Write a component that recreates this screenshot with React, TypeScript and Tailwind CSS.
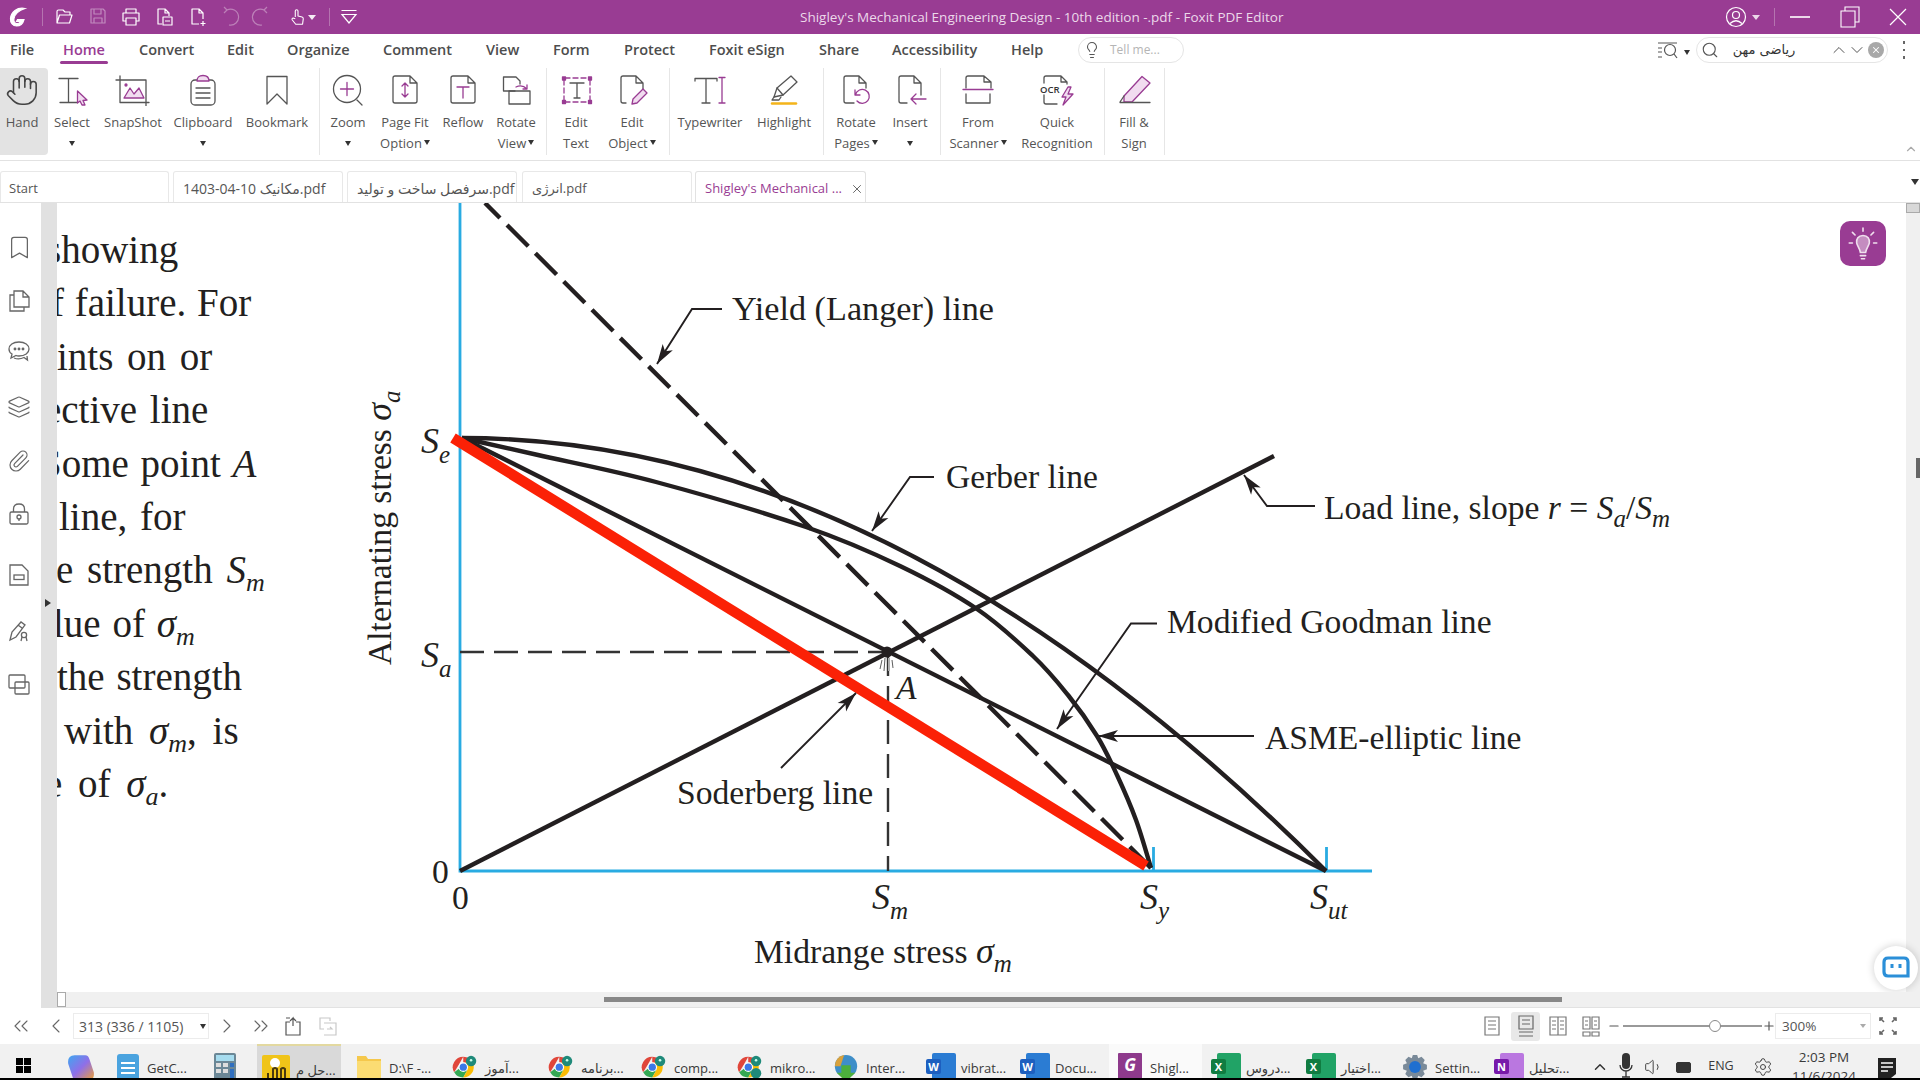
import React from "react";
import { Hand, ChevronsLeft, ChevronLeft, ChevronRight, ChevronsRight, ChevronUp, ChevronDown, X, Search, Lightbulb, Bookmark, Layers, Paperclip, Settings, Minus, Plus, Volume1 } from "lucide-react";

const G = "#555";
const P = "#993c93";
const SANS = "font-['Open_Sans','Noto_Sans','DejaVu_Sans',sans-serif]";

const Ico = ({ children, w = 40, h = 32, vb }: { children: React.ReactNode; w?: number; h?: number; vb?: string }) => (
  <svg width={w} height={h} viewBox={vb ?? `0 0 ${w} ${h}`} fill="none" stroke={G} strokeWidth={1.3} strokeLinejoin="round" strokeLinecap="round">
    {children}
  </svg>
);
const Doc = ({ x = 9, y = 2, w = 23, h = 27 }: { x?: number; y?: number; w?: number; h?: number }) => (
  <path d={`M${x + 2} ${y}H${x + w - 7}L${x + w} ${y + 7}V${y + h - 2}Q${x + w} ${y + h} ${x + w - 2} ${y + h}H${x + 2}Q${x} ${y + h} ${x} ${y + h - 2}V${y + 2}Q${x} ${y} ${x + 2} ${y}ZM${x + w - 7} ${y}V${y + 7}H${x + w}`} />
);

const icons: Record<string, React.ReactNode> = {
  hand: <Hand size={34} strokeWidth={1.1} color="#444" />,
  select: (
    <Ico>
      <path d="M7 4.5H26M16.5 4.5V28.5M8 28.5H25" />
      <path d="M25.5 17L35 26L31 26.5L33 31L30 31L28 27L25.5 29Z" stroke={P} fill="#f1dcf0" />
    </Ico>
  ),
  snap: (
    <Ico>
      <path d="M7 2V28.5H36M3 6H33V32" />
      <path d="M11 24L17 14L21 20L26 14L31 24Z" stroke={P} fill="#f1dcf0" />
      <circle cx="13" cy="11" r="1" fill={P} stroke={P} />
    </Ico>
  ),
  clip: (
    <Ico>
      <rect x="8" y="6" width="24" height="25" rx="4" />
      <path d="M14 7Q14 1.5 20 1.5Q26 1.5 26 7Z" stroke={P} fill="#f1dcf0" />
      <path d="M13 14H27M13 19H27M13 24H27" />
    </Ico>
  ),
  bookmark: (
    <Ico>
      <path d="M10 2.5H30V30L20 20L10 30Z" />
    </Ico>
  ),
  zoom: (
    <Ico>
      <circle cx="19" cy="15" r="13.5" />
      <path d="M29 26L34 31" />
      <path d="M19 8.5V21.5M12.5 15H25.5" stroke={P} />
    </Ico>
  ),
  pagefit: (
    <Ico>
      <Doc x={8} y={2} w={24} h={27} />
      <path d="M20 9V23M17 12L20 9L23 12M17 20L20 23L23 20" stroke={P} />
    </Ico>
  ),
  reflow: (
    <Ico>
      <Doc x={8} y={2} w={24} h={27} />
      <path d="M14 13H26M20 13V24" stroke={P} />
    </Ico>
  ),
  rotateview: (
    <Ico>
      <path d="M19 17H7.5V3H20L24 7V10" />
      <path d="M13 30V17H34V30Z" />
      <path d="M20 13Q26 10 31 15M31 15L31 11M31 15L27 15" stroke={P} />
    </Ico>
  ),
  edittext: (
    <Ico>
      <path d="M9 4H33M9 28H33M8 6V26M34 6V26" strokeDasharray="5 3" stroke={P} />
      <rect x="6.5" y="3" width="3" height="3" fill={P} stroke={P} />
      <rect x="32.5" y="3" width="3" height="3" fill={P} stroke={P} />
      <rect x="6.5" y="26.5" width="3" height="3" fill={P} stroke={P} />
      <rect x="32.5" y="26.5" width="3" height="3" fill={P} stroke={P} />
      <path d="M14 9H28M21 9V24M18 24H24" />
    </Ico>
  ),
  editobj: (
    <Ico>
      <path d="M14 29H11Q9 29 9 27V4Q9 2 11 2H24L31 9V15M24 2V9H31" />
      <path d="M20 30L21 25L31 15L35 19L25 29Z" stroke={P} fill="#f1dcf0" />
    </Ico>
  ),
  typewriter: (
    <Ico>
      <path d="M5 7V4.5H27V7M16 4.5V29M12 29H20" />
      <path d="M29 3.5H35M32 3.5V29M29 29H35" stroke={P} />
    </Ico>
  ),
  highlight: (
    <Ico>
      <path d="M10 23L13 14L27 2L33 8L19 21Z" fill="#fff" />
      <path d="M13 14L19 21M10 23L8 26H15L17 23" />
      <path d="M8 29.5H32" stroke="#f4b41a" strokeWidth="2.5" />
    </Ico>
  ),
  rotatepages: (
    <Ico>
      <path d="M18 29H10Q8 29 8 27V4Q8 2 10 2H23L30 9V14M23 2V9H30" />
      <path d="M19 16L19 21L24 21M19.5 20.5A7 7 0 1 1 21 27" stroke={P} />
    </Ico>
  ),
  insert: (
    <Ico>
      <path d="M17 29H11Q9 29 9 27V4Q9 2 11 2H24L31 9V21M24 2V9H31" />
      <path d="M36 25H21M26 20L21 25L26 30" stroke={P} />
    </Ico>
  ),
  scanner: (
    <Ico>
      <path d="M8 14V4Q8 2 10 2H26L33 8V14M26 2V8H33" />
      <path d="M5 15.5H35" stroke={P} />
      <path d="M8 20V29H32V20" />
    </Ico>
  ),
  ocr: (
    <Ico>
      <path d="M7 9V4Q7 2 9 2H24L30 8V10M24 2V8H30M7 21V28Q7 30 9 30H20" />
      <text x="3" y="19" fontSize="9.5" fontFamily="Open Sans" fill="#333" stroke="none" fontWeight="600">OCR</text>
      <path d="M31 13L25 23H29L26 31L36 20H31L34 13Z" stroke={P} fill="#f1dcf0" />
    </Ico>
  ),
  fill: (
    <Ico>
      <path d="M10 22L28 2.5L36 9L18 28H10Z" stroke={P} fill="#f1dcf0" />
      <path d="M6 28.5H36M10 22L6 28" />
    </Ico>
  ),
};

const Caret = () => <span className="inline-block w-0 h-0 border-l-[3.5px] border-r-[3.5px] border-t-[5px] border-l-transparent border-r-transparent border-t-[#333]" />;

type RItem = { w: string; icon: string; l1: string; l2?: string; caret?: "below" | "inline"; active?: boolean };
const ribbon: (RItem | { sep: string })[] = [
  { w: "w-[48px]", icon: "hand", l1: "Hand", active: true },
  { w: "w-[48px]", icon: "select", l1: "Select", caret: "below" },
  { w: "w-[74px]", icon: "snap", l1: "SnapShot" },
  { w: "w-[66px]", icon: "clip", l1: "Clipboard", caret: "below" },
  { w: "w-[82px]", icon: "bookmark", l1: "Bookmark" },
  { sep: "w-[2px]" },
  { w: "w-[56px]", icon: "zoom", l1: "Zoom", caret: "below" },
  { w: "w-[58px]", icon: "pagefit", l1: "Page Fit", l2: "Option", caret: "inline" },
  { w: "w-[58px]", icon: "reflow", l1: "Reflow" },
  { w: "w-[48px]", icon: "rotateview", l1: "Rotate", l2: "View", caret: "inline" },
  { sep: "w-[7px]" },
  { w: "w-[58px]", icon: "edittext", l1: "Edit", l2: "Text" },
  { w: "w-[54px]", icon: "editobj", l1: "Edit", l2: "Object", caret: "inline" },
  { sep: "w-[11px]" },
  { w: "w-[80px]", icon: "typewriter", l1: "Typewriter" },
  { w: "w-[68px]", icon: "highlight", l1: "Highlight" },
  { sep: "w-[6px]" },
  { w: "w-[64px]", icon: "rotatepages", l1: "Rotate", l2: "Pages", caret: "inline" },
  { w: "w-[44px]", icon: "insert", l1: "Insert", caret: "below" },
  { sep: "w-[9px]" },
  { w: "w-[74px]", icon: "scanner", l1: "From", l2: "Scanner", caret: "inline" },
  { w: "w-[84px]", icon: "ocr", l1: "Quick", l2: "Recognition" },
  { sep: "w-[6px]" },
  { w: "w-[58px]", icon: "fill", l1: "Fill &", l2: "Sign" },
  { sep: "w-[2px]" },
];

const menu = [
  ["File", "w-[63px]", "pl-[10px]"],
  ["Home", "w-[76px]", ""],
  ["Convert", "w-[88px]", ""],
  ["Edit", "w-[60px]", ""],
  ["Organize", "w-[96px]", ""],
  ["Comment", "w-[103px]", ""],
  ["View", "w-[67px]", ""],
  ["Form", "w-[71px]", ""],
  ["Protect", "w-[85px]", ""],
  ["Foxit eSign", "w-[110px]", ""],
  ["Share", "w-[73px]", ""],
  ["Accessibility", "w-[119px]", ""],
  ["Help", "w-[67px]", ""],
];

const Qa = ({ className, children }: { className: string; children: React.ReactNode }) => (
  <div className={`flex justify-center ${className}`}>
    <svg width="22" height="22" viewBox="0 0 22 22" fill="none" stroke="#fff" strokeWidth="1.2" strokeLinejoin="round">{children}</svg>
  </div>
);

const TitleBar = () => (
  <div className="h-[34px] bg-[#993c93] flex items-center shrink-0 text-white relative">
    <div className="w-[36px] flex justify-center items-center">
      <svg width="20" height="22" viewBox="0 0 20 22" fill="none">
        <path d="M17 2.5C9 1 3 6 2.5 12.5C2.2 17 5 20 8.5 20C12 20 15 17.5 16 13.5L9.5 13.5L8.5 15.5L12.5 15.5C11.5 17 10 17.8 8.5 17.6C6.5 17.2 5.5 15 6 12.5C6.8 8 11 4.5 17 2.5Z" fill="#fff" stroke="#fff" strokeWidth="1.2" />
      </svg>
    </div>
    <div className="w-[6px]" />
    <div className="w-px h-[18px] bg-[#b574b0]" />
    <div className="w-[6px]" />
    <div className="flex items-center w-[239px]">
      <Qa className="w-[31px]"><path d="M3 17V5.5Q3 4 4.5 4H9L11 6H16V9M3 17H15.5L18 9H5.5L3 17Z" /></Qa>
      <Qa className="w-[36px] opacity-40"><path d="M4 3H16L18 5V17H4ZM7 3V8H14V3M7 17V12H15V17" /></Qa>
      <Qa className="w-[30px]"><path d="M6 7V3H16V7M6 15H3V7H19V15H16M6 12H16V19H6Z" /></Qa>
      <Qa className="w-[35px]"><path d="M9 18H5V3H12L16 7V10M12 3V7H16M10 11H19V19H10ZM12 15H17" /></Qa>
      <Qa className="w-[33px]"><path d="M12 18H5V3H12L16 7V13M12 3V7H16M16 15V20M13.5 17.5H18.5" /></Qa>
      <Qa className="w-[32px] opacity-35"><path d="M8 4A8 8 0 1 1 10 19M8 4L5 7M8 4L5 1" /></Qa>
      <Qa className="w-[30px] opacity-35"><path d="M14 4A8 8 0 1 0 12 19M14 4L17 7M14 4L17 1" /></Qa>
    </div>
    <div className="flex items-center w-[30px]">
      <Qa className="w-[20px]"><path d="M8 11V4.5Q8 3 9.5 3Q11 3 11 4.5V10L15.5 11Q17 11.5 16.8 13L16 19H8.5L4.5 14Q4 12.5 5.5 12L8 13" /></Qa>
      <span className="w-0 h-0 border-l-[4px] border-r-[4px] border-t-[5px] border-l-transparent border-r-transparent border-t-white/90" />
    </div>
    <div className="w-[11px]" />
    <div className="w-px h-[18px] bg-[#b574b0]" />
    <div className="w-[20px] flex justify-center ml-[9px]">
      <svg width="18" height="18" viewBox="0 0 18 18" fill="none" stroke="#fff" strokeWidth="1.2"><path d="M1.5 2.5H16.5M2 6.5L9 15L16 6.5Z" /></svg>
    </div>
    <div className="flex-1 pl-[441px] text-[13.5px] text-[#ecd9ea] whitespace-nowrap">Shigley's Mechanical Engineering Design - 10th edition -.pdf - Foxit PDF Editor</div>
    <div className="flex items-center shrink-0">
      <svg width="22" height="22" viewBox="0 0 22 22" fill="none" stroke="#fff" strokeWidth="1.2"><circle cx="11" cy="11" r="9.5" /><circle cx="11" cy="9" r="3.5" /><path d="M5 17.5Q11 12 17 17.5" /></svg>
      <span className="ml-[5px] mr-[14px] w-0 h-0 border-l-[4px] border-r-[4px] border-t-[5px] border-l-transparent border-r-transparent border-t-white/80" />
      <div className="w-px h-[18px] bg-[#b574b0]" />
      <div className="w-[49px] flex justify-center"><div className="w-[20px] h-[1.5px] bg-white/80" /></div>
      <div className="w-[51px] flex justify-center">
        <svg width="20" height="22" viewBox="0 0 20 22" fill="none" stroke="#fff" strokeWidth="1.1"><path d="M5 5V1H19V16H15M1 5H15V21H1Z" /></svg>
      </div>
      <div className="w-[45px] flex justify-center">
        <svg width="20" height="20" viewBox="0 0 20 20" fill="none" stroke="#fff" strokeWidth="1.2"><path d="M2 2L18 18M18 2L2 18" /></svg>
      </div>
    </div>
  </div>
);

const MenuRow = () => (
  <div className="h-[32px] flex items-center shrink-0 text-[14.5px] font-semibold text-[#4d4d4d] bg-white">
    <div className="flex items-center h-full">
      {menu.map(([t, w, p]) => (
        <div key={t} className={`${w} ${p} h-full flex items-center whitespace-nowrap`}>
          {t === "Home" ? (
            <div className="relative text-[#993c93] h-full flex items-center">
              {t}
              <div className="absolute left-[-3px] right-[-3px] top-[27px] h-[3px] rounded bg-[#993c93]" />
            </div>
          ) : (
            t
          )}
        </div>
      ))}
    </div>
    <div className="w-[106px] h-[26px] rounded-full border border-[#e5e5e5] flex items-center pl-[4px] gap-[9px] font-normal text-[12px] text-[#b5b5b5]">
      <Lightbulb size={18} strokeWidth={1.4} color="#555" />
      Tell me...
    </div>
    <div className="flex-1" />
    <svg width="22" height="20" viewBox="0 0 22 20" fill="none" stroke="#555" strokeWidth="1.2"><path d="M1 3H20M1 8H5M1 12H5M1 17H5" /><circle cx="13" cy="10" r="5.5" /><path d="M17 14L20 18" /></svg>
    <span className="ml-[5px] mr-[6px]"><Caret /></span>
    <div className="w-[192px] h-[26px] rounded-full border border-[#e5e5e5] flex items-center pl-[4px] font-normal">
      <Search size={18} strokeWidth={1.5} color="#555" />
      <span className="ml-[12px] text-[13px] text-[#333] font-['DejaVu_Sans',sans-serif] w-[66px] text-center" dir="rtl">ریاضی مهن</span>
      <div className="flex-1" />
      <ChevronUp size={20} strokeWidth={1.2} color="#555" />
      <ChevronDown size={20} strokeWidth={1.2} color="#555" className="ml-[-2px]" />
      <span className="ml-[1px] mr-[3px] w-[16px] h-[16px] rounded-full bg-[#a8a8a8] flex items-center justify-center"><X size={10} color="#fff" strokeWidth={2.5} /></span>
    </div>
    <div className="w-[32px] flex flex-col items-center gap-[5px]">
      <span className="w-[2.5px] h-[2.5px] bg-[#666]" />
      <span className="w-[2.5px] h-[2.5px] bg-[#666]" />
      <span className="w-[2.5px] h-[2.5px] bg-[#666]" />
    </div>
  </div>
);

const Ribbon = () => (
  <div className="h-[95px] shrink-0 border-b border-[#e2e2e2] flex items-start relative bg-white">
    {ribbon.map((it, i) =>
      "sep" in it ? (
        <div key={i} className={`${it.sep} h-[87px] mt-[2px] border-r border-[#e6e6e6]`} />
      ) : (
        <div key={i} className={`${it.w} h-[87px] mt-[2px] flex flex-col items-center pt-[6px] text-[13px] leading-[21px] text-[#555] whitespace-nowrap ${it.active ? "bg-[#e3e3e3] rounded-r-[4px] pr-[4px]" : ""}`}>
          <div className="h-[32px] flex items-center justify-center">{icons[it.icon]}</div>
          <div className="mt-[6px]">{it.l1}</div>
          {it.l2 && (
            <div className="flex items-center gap-[2px]">
              {it.l2}
              {it.caret === "inline" && <span className="mt-[-7px]"><Caret /></span>}
            </div>
          )}
          {it.caret === "below" && <div className="h-[21px] flex items-center"><Caret /></div>}
        </div>
      )
    )}
    <ChevronUp size={14} color="#aaa" className="absolute right-[2px] top-[76px]" />
  </div>
);

const tabs = [
  ["Start", "w-[169px] text-[13px]", "pl-[8px]"],
  ["1403-04-10 مکانیک.pdf", "w-[170px] ml-[4px] text-[14px]", "pl-[9px]"],
  ["سرفصل ساخت و تولید.pdf", "w-[170px] ml-[4px] text-[14px]", "pl-[9px]"],
  ["انرژی.pdf", "w-[170px] ml-[5px] text-[13px]", "pl-[9px]"],
];

const TabRow = () => (
  <div className="h-[42px] shrink-0 border-b border-[#e2e2e2] flex items-end text-[#555] bg-white relative">
    {tabs.map(([t, w, p]) => (
      <div key={t} className={`${w} ${p} h-[31px] pt-[3px] border border-b-0 border-[#e8e8e8] rounded-t-[3px] flex items-center whitespace-nowrap`}>{t}</div>
    ))}
    <div className="w-[171px] ml-[3px] h-[31px] pt-[3px] border border-b-0 border-[#e2e2e2] rounded-t-[3px] flex items-center pl-[9px] text-[13px] text-[#993c93] whitespace-nowrap">
      <span className="w-[145px]">Shigley's Mechanical ...</span>
      <X size={14} color="#555" strokeWidth={1.5} />
    </div>
    <span className="absolute right-[1px] top-[18px] w-0 h-0 border-l-[4.5px] border-r-[4.5px] border-t-[6px] border-l-transparent border-r-transparent border-t-[#333]" />
  </div>
);

const sideIcons: [string, React.ReactNode][] = [
  ["mt-[32px]", <Bookmark size={27} strokeWidth={1.1} color="#666" />],
  ["mt-[30px]", <svg width="24" height="24" viewBox="0 0 24 24" fill="none" stroke="#666" strokeWidth="1.3"><path d="M7 18V2H16L22 8V18ZM16 2V8H22M7 6H3V22H17V18" /></svg>],
  ["mt-[27px]", <svg width="24" height="24" viewBox="0 0 24 24" fill="none" stroke="#666" strokeWidth="1.3"><path d="M12 2C6 2 2 5 2 9C2 11 3 13 5 14L4 18L9 15.5C10 16 11 16 12 16C18 16 22 13 22 9C22 5 18 2 12 2Z" /><path d="M7 18Q12 20 17 17.5L20.5 20L20 16" /><circle cx="8" cy="9" r=".8" fill="#666" /><circle cx="12" cy="9" r=".8" fill="#666" /><circle cx="16" cy="9" r=".8" fill="#666" /></svg>],
  ["mt-[31px]", <Layers size={24} strokeWidth={1.2} color="#666" />],
  ["mt-[30px]", <Paperclip size={24} strokeWidth={1.2} color="#666" />],
  ["mt-[29px]", <svg width="24" height="24" viewBox="0 0 24 24" fill="none" stroke="#666" strokeWidth="1.3"><rect x="3" y="10" width="18" height="12" rx="1.5" /><path d="M6.5 10V7Q6.5 2 12 2Q17.5 2 17.5 7V10" /><circle cx="12" cy="15" r="2" /><path d="M12 17V19" /></svg>],
  ["mt-[37px]", <svg width="24" height="24" viewBox="0 0 24 24" fill="none" stroke="#666" strokeWidth="1.3"><path d="M3 2H15L21 8V22H3Z" /><rect x="7" y="12" width="10" height="4.5" /></svg>],
  ["mt-[32px]", <svg width="24" height="24" viewBox="0 0 24 24" fill="none" stroke="#666" strokeWidth="1.3"><path d="M3 21L5 13L14 3L18 6L9 18L3 21ZM11 6L15 9" /><circle cx="17" cy="16" r="2.6" /><path d="M15 18L14 22M19 18L20 22" /></svg>],
  ["mt-[29px]", <svg width="24" height="24" viewBox="0 0 24 24" fill="none" stroke="#666" strokeWidth="1.3"><rect x="2" y="3" width="16" height="13" rx="1" /><rect x="8" y="10" width="14" height="12" rx="1" /></svg>],
];

const Sub = ({ children }: { children: React.ReactNode }) => <i className="text-[26px] leading-none align-[-8px]">{children}</i>;

const lines: [string, React.ReactNode][] = [
  ["ml-[-11px]", "showing"],
  ["ml-[-6px] [word-spacing:1px]", "f failure. For"],
  ["ml-[0px] [word-spacing:4px]", "ints on or"],
  ["ml-[-13px] [word-spacing:3px]", "ective line"],
  ["ml-[-17px] [word-spacing:2px]", <>Some point <i>A</i></>],
  ["ml-[2px] [word-spacing:3px]", "line, for"],
  ["ml-[-1px] [word-spacing:4px]", <>e strength <i>S</i><Sub>m</Sub></>],
  ["ml-[-4px] [word-spacing:2px]", <>lue of <i>σ</i><Sub>m</Sub></>],
  ["ml-[0px] [word-spacing:2px]", "the strength"],
  ["ml-[7px] [word-spacing:6px]", <>with <i>σ</i><Sub>m</Sub>, is</>],
  ["ml-[-12px] [word-spacing:6px]", <>e of <i>σ</i><Sub>a</Sub>.</>],
];

const smooth = (p: number[][]) => {
  let d = `M${p[0][0]} ${p[0][1]}`;
  for (let i = 0; i < p.length - 1; i++) {
    const a = p[Math.max(i - 1, 0)], b = p[i], c = p[i + 1], e = p[Math.min(i + 2, p.length - 1)];
    d += `C${(b[0] + (c[0] - a[0]) / 6).toFixed(1)} ${(b[1] + (c[1] - a[1]) / 6).toFixed(1)} ${(c[0] - (e[0] - b[0]) / 6).toFixed(1)} ${(c[1] - (e[1] - b[1]) / 6).toFixed(1)} ${c[0]} ${c[1]}`;
  }
  return d;
};
const K = "#231f20";
const Leader = ({ pts }: { pts: number[][] }) => {
  const n = pts.length;
  const [tx, ty] = pts[n - 1];
  const [fx, fy] = pts[n - 2];
  const a = Math.atan2(ty - fy, tx - fx);
  const L = 20, W = 6, N = 15;
  const bx = tx - L * Math.cos(a), by = ty - L * Math.sin(a);
  const nx = tx - N * Math.cos(a), ny = ty - N * Math.sin(a);
  const lx = bx - W * Math.sin(a), ly = by + W * Math.cos(a);
  const rx = bx + W * Math.sin(a), ry = by - W * Math.cos(a);
  return (
    <g>
      <polyline points={pts.map((p) => p.join(",")).join(" ")} fill="none" stroke={K} strokeWidth="1.9" />
      <polygon points={`${tx},${ty} ${lx},${ly} ${nx},${ny} ${rx},${ry}`} fill={K} />
    </g>
  );
};
const S2 = ({ x, y, s, dy = 10, fs = 25 }: { x: number; y: number; s: string; dy?: number; fs?: number }) => (
  <text x={x} y={y} fill={K}>
    <tspan fontStyle="italic" fontSize="36">S</tspan>
    <tspan fontStyle="italic" fontSize={fs} dy={dy}>{s}</tspan>
  </text>
);

const Chart = () => (
  <svg className="w-[1606px] h-[789px] shrink-0 font-['Liberation_Serif',serif] text-[33.6px]" viewBox="300 203 1606 789">
    <path d="M460 203V871H1372M1153.5 847V871M1326.5 847V871" fill="none" stroke="#29abe2" strokeWidth="2.8" />
    <path d="M460 652H887M888 652V871" fill="none" stroke="#333" strokeWidth="2.4" strokeDasharray="24 10" />
    <path d="M1151 868L485 203" fill="none" stroke={K} strokeWidth="4.4" strokeDasharray="30 10" />
    <path d="M462 438Q893 438 1326 871" fill="none" stroke={K} strokeWidth="4.4" />
    <path d={smooth([[462, 438], [538, 455], [656, 482], [806, 527], [900, 566], [977, 609], [1033, 656], [1068, 695], [1097, 736], [1117, 775], [1136, 820], [1151, 868]])} fill="none" stroke={K} strokeWidth="4.4" />
    <path d="M462 438L1326 871" fill="none" stroke={K} strokeWidth="4.4" />
    <path d="M460 871L1274 456" fill="none" stroke={K} strokeWidth="4.4" />
    <path d="M453 438L1146 866" fill="none" stroke="#fb2106" strokeWidth="10.5" />
    <circle cx="887" cy="652" r="5.5" fill={K} />
    <path d="M882 660L880 669M885 658L884 671M889 658L889 671M892 660L893 668" stroke="#fff" strokeWidth="2" />
    <path d="M882 660L880 669M885 658L884 671M889 658L889 671M892 660L893 668" stroke="#333" strokeWidth="0.8" />
    <Leader pts={[[722, 309], [692, 309], [657, 364]]} />
    <Leader pts={[[934, 477], [910, 477], [872, 531]]} />
    <Leader pts={[[1315, 506], [1267, 506], [1244, 475]]} />
    <Leader pts={[[1157, 623.5], [1131, 623.5], [1057, 729]]} />
    <Leader pts={[[1254, 736], [1098, 736]]} />
    <Leader pts={[[781, 768], [856, 693]]} />
    <text x="732" y="320" fill={K} fontSize="34.2">Yield (Langer) line</text>
    <text x="946" y="488" fill={K}>Gerber line</text>
    <text x="1324" y="519" fill={K}>Load line, slope <tspan fontStyle="italic">r</tspan> = <tspan fontStyle="italic">S</tspan><tspan fontStyle="italic" fontSize="25" dy="8">a</tspan><tspan dy="-8">/</tspan><tspan fontStyle="italic">S</tspan><tspan fontStyle="italic" fontSize="25" dy="8">m</tspan></text>
    <text x="1167" y="633" fill={K}>Modified Goodman line</text>
    <text x="1265" y="749" fill={K}>ASME-elliptic line</text>
    <text x="677" y="804" fill={K}>Soderberg line</text>
    <S2 x={421} y={453} s="e" />
    <S2 x={421} y={667} s="a" />
    <S2 x={872} y={909} s="m" />
    <S2 x={1140} y={909} s="y" />
    <S2 x={1310} y={909} s="ut" />
    <text x="432" y="883" fill={K}>0</text>
    <text x="452" y="909" fill={K}>0</text>
    <text x="896" y="699" fill={K} fontStyle="italic">A</text>
    <text x="754" y="963" fill={K}>Midrange stress <tspan fontStyle="italic" fontSize="36">σ</tspan><tspan fontStyle="italic" fontSize="25" dy="9">m</tspan></text>
    <text transform="translate(391 665) rotate(-90)" fill={K}>Alternating stress <tspan fontStyle="italic" fontSize="36">σ</tspan><tspan fontStyle="italic" fontSize="25" dy="9">a</tspan></text>
  </svg>
);

const DocArea = () => (
  <div className="flex-1 min-h-0 flex bg-white">
    <div className="w-[41px] shrink-0 flex flex-col items-center">
      {sideIcons.map(([m, ic], i) => (
        <div key={i} className={`${m} h-[24px] flex items-center justify-center ml-[-3px]`}>{ic}</div>
      ))}
    </div>
    <div className="w-[16px] shrink-0 bg-[#e1e1e1] relative">
      <span className="absolute left-[4px] top-[396px] w-0 h-0 border-t-[4px] border-b-[4px] border-l-[6px] border-t-transparent border-b-transparent border-l-[#333]" />
    </div>
    <div className="flex-1 min-w-0 flex flex-col">
      <div className="flex-1 min-h-0 flex relative">
        <div className="flex-1 min-w-0 flex overflow-hidden">
          <div className="w-[243px] shrink-0 overflow-hidden pt-[20px] font-['Liberation_Serif',serif] text-[39px] text-[#231f20] whitespace-nowrap">
            {lines.map(([m, t], i) => (
              <div key={i} className={`${m} h-[53.4px] leading-[53.4px]`}>{t}</div>
            ))}
          </div>
          <Chart />
        </div>
        <div className="w-[14px] shrink-0 bg-[#f0f0f0] relative">
          <div className="h-[10px] bg-[#d8d8d8] border border-[#aaa]" />
          <div className="absolute right-0 top-[255px] w-[4px] h-[20px] bg-[#666]" />
        </div>
        <div className="absolute left-[1783px] top-[18px] w-[46px] h-[45px] rounded-[10px] bg-[#993c93] flex items-center justify-center">
          <svg width="32" height="36" viewBox="0 0 30 34" fill="none" stroke="#f0dfee" strokeWidth="1.5" strokeLinecap="round">
            <path d="M15 9C10.5 9 8.5 12.5 9 16C9.5 19 12 21 12.5 25H17.5C18 21 20.5 19 21 16C21.5 12.5 19.5 9 15 9Z" fill="#c48cc0" />
            <path d="M12.5 28H17.5M13.5 31H16.5M15 2V5M5 6L7.5 8.5M25 6L22.5 8.5M2 16H5M25 16H28" />
          </svg>
        </div>
        <div className="absolute left-[1817px] top-[743px] w-[44px] h-[44px] rounded-full bg-white shadow-[0_0_8px_rgba(0,0,0,0.2)] flex items-center justify-center">
          <svg width="28" height="26" viewBox="0 0 28 26" fill="none" stroke="#2b8fd8" strokeWidth="3.2">
            <path d="M6 3H22Q26 3 26 7V21H6Q2 21 2 17V7Q2 3 6 3Z" />
            <path d="M10 9V13M18 9V13" strokeWidth="3" />
          </svg>
        </div>
      </div>
      <div className="h-[16px] shrink-0 bg-[#f0f0f0] flex items-center border-b border-[#e2e2e2] relative">
        <div className="w-[9px] h-full bg-white border border-[#aaa]" />
        <div className="ml-[538px] w-[958px] h-[5px] bg-[#888]" />
      </div>
    </div>
  </div>
);

const PageIcon = ({ className, children }: { className: string; children: React.ReactNode }) => (
  <div className={`flex justify-center items-center ${className}`}>
    <svg width="22" height="22" viewBox="0 0 22 22" fill="none" stroke="#777" strokeWidth="1.2">{children}</svg>
  </div>
);

const StatusBar = () => (
  <div className="h-[36px] shrink-0 bg-white flex items-center text-[#555] text-[14px]">
    <div className="w-[42px] flex justify-center"><ChevronsLeft size={24} strokeWidth={1.1} color="#666" /></div>
    <div className="w-[27px] flex justify-center"><ChevronLeft size={24} strokeWidth={1.1} color="#666" /></div>
    <div className="w-[4px]" />
    <div className="w-[136px] h-[26px] border border-[#ececec] flex items-center pl-[5px] text-[14px] whitespace-nowrap">
      <span className="w-[121px]">313 (336 / 1105)</span>
      <Caret />
    </div>
    <div className="w-[36px] flex justify-center"><ChevronRight size={24} strokeWidth={1.1} color="#666" /></div>
    <div className="w-[32px] flex justify-center"><ChevronsRight size={24} strokeWidth={1.1} color="#666" /></div>
    <PageIcon className="w-[34px]"><path d="M7 7H3V20H17V7H13M7 3H3M10 11V3L7 6M10 3L13 6" stroke="#555" /></PageIcon>
    <PageIcon className="w-[33px] opacity-40"><path d="M7 14H3V3H13V6M7 8H19V20H7M10 14H15L13 12" /></PageIcon>
    <div className="flex-1" />
    <PageIcon className="w-[26px] mr-[6px]"><path d="M4 2H18V20H4ZM7 6H15M7 10H15M7 14H15" /></PageIcon>
    <div className="w-[29px] h-[29px] rounded-[3px] bg-[#e8e8e8] flex items-center justify-center">
      <svg width="22" height="24" viewBox="0 0 22 24" fill="none" stroke="#666" strokeWidth="1.2"><path d="M4 2H18V15H4ZM7 6H15M7 10H15M4 18H18M4 22H18" /></svg>
    </div>
    <PageIcon className="w-[34px] ml-[1px]"><path d="M3 2H19V20H3ZM11 2V20M5 6H9M5 10H9M5 14H9M13 6H17M13 10H17M13 14H17" /></PageIcon>
    <PageIcon className="w-[32px]"><path d="M3 2H10V14H3ZM12 2H19V14H12ZM3 17H10V21H3ZM12 17H19V21H12ZM5 6H8M5 10H8M14 6H17M14 10H17" /></PageIcon>
    <Minus size={14} color="#555" />
    <div className="w-[139px] h-[20px] ml-[2px] flex items-center relative">
      <div className="w-full h-[1.5px] bg-[#999]" />
      <div className="absolute left-[86px] w-[12px] h-[12px] rounded-full border border-[#888] bg-white" />
    </div>
    <Plus size={14} color="#555" />
    <div className="w-[96px] h-[26px] ml-[-1px] border border-[#ececec] flex items-center pl-[6px] text-[13.5px]">
      <span className="w-[78px]">300%</span>
      <span className="w-0 h-0 border-l-[3px] border-r-[3px] border-t-[4px] border-l-transparent border-r-transparent border-t-[#aaa]" />
    </div>
    <div className="w-[34px] flex justify-center">
      <svg width="18" height="18" viewBox="0 0 18 18" fill="none" stroke="#666" strokeWidth="1.6"><path d="M1 1L5 5M1 4V1H4M17 1L13 5M14 1H17V4M1 17L5 13M1 14V17H4M17 17L13 13M14 17H17V14" /></svg>
    </div>
    <div className="w-[15px]" />
  </div>
);

const ChromeIcon = ({ badge2 }: { badge2?: boolean }) => (
  <svg width="30" height="30" viewBox="0 0 30 30">
    <path d="M13 2A12 12 0 0 1 24 9H13Z" fill="#e0463a" />
    <path d="M13 2A12 12 0 0 0 2.5 20L8 11Z" fill="#e0463a" />
    <path d="M2.5 20A12 12 0 0 0 13 26L18 17L8 16Z" fill="#35a853" />
    <path d="M24 9A12 12 0 0 1 13 26L18 17L14 9Z" fill="#fbbc04" />
    <circle cx="13" cy="14" r="5.5" fill="#fff" />
    <circle cx="13" cy="14" r="4.2" fill="#3b78e7" />
    <circle cx="22" cy="7" r="6" fill="#1f8a7a" />
    <circle cx="22" cy="6" r="1.5" fill="#cfe" />
    {badge2 && <circle cx="22" cy="21" r="6" fill="#1f8a7a" />}
  </svg>
);
const Office = ({ c1, c2, l }: { c1: string; c2: string; l: string }) => (
  <div className="w-[30px] h-[30px] relative shrink-0">
    <div className={`absolute left-[6px] top-0 w-[24px] h-[30px] rounded-[2px] ${c2}`} />
    <div className={`absolute left-0 top-[6px] w-[15px] h-[15px] rounded-[2px] ${c1} text-white text-[11px] font-bold flex items-center justify-center leading-none`}>{l}</div>
  </div>
);
const FolderIcon = () => (
  <svg width="26" height="26" viewBox="0 0 26 26"><path d="M1 3H10L12 6H25V25H1Z" fill="#f5c84c" /><path d="M1 8H25V25H1Z" fill="#fbdc73" /></svg>
);

type App = { w: string; icon: React.ReactNode; t: string; cls?: string };
const apps: App[] = [
  { w: "w-[84px] pl-[6px]", cls: "bg-[#d9d9d9] border-t-[2px] border-[#e3d9a0]", icon: (
    <div className="w-[28px] h-[30px] bg-[#f0c419] rounded-[2px] relative shrink-0 overflow-hidden">
      <div className="absolute left-[8px] top-[3px] w-[10px] h-[10px] rounded-full bg-white" />
      <svg className="absolute left-[4px] top-[10px]" width="24" height="18" viewBox="0 0 24 18" fill="none" stroke="#4a3a10" strokeWidth="2"><path d="M2 16V8M7 16V4Q9 2 11 4V16M15 16V4Q17 2 19 4V16" /></svg>
    </div>
  ), t: "حل م..." },
  { w: "w-[96px] ml-[15px]", icon: <FolderIcon />, t: "D:\\F -..." },
  { w: "w-[96px]", icon: <ChromeIcon />, t: "آموز..." },
  { w: "w-[93px]", icon: <ChromeIcon />, t: "برنامه..." },
  { w: "w-[96px]", icon: <ChromeIcon />, t: "comp..." },
  { w: "w-[96px]", icon: <ChromeIcon badge2 />, t: "mikro..." },
  { w: "w-[95px]", icon: <svg width="28" height="30" viewBox="0 0 28 30"><circle cx="14" cy="13" r="12" fill="#3e8ec8" /><path d="M2 13A12 12 0 0 1 12 1L8 13Z" fill="#d9a13b" /><path d="M9 12H19V20H24L14 30L4 20H9Z" fill="#4caf3c" /></svg>, t: "Inter..." },
  { w: "w-[94px]", icon: <Office c1="bg-[#1d5fbf]" c2="bg-[#2b7cd3]" l="W" />, t: "vibrat..." },
  { w: "w-[87px]", icon: <Office c1="bg-[#1d5fbf]" c2="bg-[#2b7cd3]" l="W" />, t: "Docu..." },
  { w: "w-[93px] pl-[8px]", cls: "bg-[#fafafa]", icon: <div className="w-[24px] h-[30px] bg-[#8e3a8c] rounded-[1px] text-white italic font-bold text-[17px] leading-[24px] text-center shrink-0">G</div>, t: "Shigl..." },
  { w: "w-[95px] ml-[11px]", icon: <Office c1="bg-[#107c41]" c2="bg-[#21a366]" l="X" />, t: "دروس..." },
  { w: "w-[94px]", icon: <Office c1="bg-[#107c41]" c2="bg-[#21a366]" l="X" />, t: "اختيار..." },
  { w: "w-[94px]", icon: <svg width="28" height="28" viewBox="0 0 24 24"><path d="M10 1H14L15 4L18 2.5L21 5.5L19.5 8.5L23 10V14L19.5 15.5L21 18.5L18 21.5L15 20L14 23H10L9 20L6 21.5L3 18.5L4.5 15.5L1 14V10L4.5 8.5L3 5.5L6 2.5L9 4Z" fill="#7a8a99" /><circle cx="12" cy="12" r="5.5" fill="#1f6fd0" /></svg>, t: "Settin..." },
  { w: "w-[94px]", icon: <Office c1="bg-[#7719aa]" c2="bg-[#ba77e0]" l="N" />, t: "تحليل..." },
];

const Taskbar = () => (
  <div className="h-[34px] shrink-0 bg-[#f1f1f1] overflow-hidden flex items-stretch text-[13px] text-[#3a3a3a] whitespace-nowrap">
    <div className="w-[46px] flex justify-center pt-[14px]">
      <div className="w-[15px] h-[15px] grid grid-cols-2 gap-[1px]">
        <span className="bg-black" /><span className="bg-black" /><span className="bg-black" /><span className="bg-black" />
      </div>
    </div>
    <div className="w-[70px] flex justify-center pt-[9px]">
      <svg width="30" height="32" viewBox="0 0 28 30">
        <defs><linearGradient id="cp" x1="0" y1="0" x2="1" y2="1"><stop offset="0" stopColor="#3fa7f0" /><stop offset=".5" stopColor="#8f6fe8" /><stop offset="1" stopColor="#f0a030" /></linearGradient></defs>
        <path d="M8 2H18Q21 2 22 6L26 18Q27 26 20 26H10Q7 26 6 22L2 10Q1 2 8 2Z" fill="url(#cp)" />
      </svg>
    </div>
    <div className="w-[97px] flex items-start gap-[7px] pt-[9px]">
      <svg width="24" height="30" viewBox="0 0 24 30"><rect x="1" y="1" width="22" height="29" rx="3" fill="#4aa3df" /><path d="M5 10H19M5 15H19M5 20H19" stroke="#fff" strokeWidth="2" /></svg>
      <span className="mt-[6px]">GetC...</span>
    </div>
    <div className="w-[26px] pt-[9px]">
      <svg width="24" height="30" viewBox="0 0 24 30"><rect x="1" y="0" width="22" height="30" rx="2" fill="#6b8796" /><rect x="3" y="2" width="18" height="6" fill="#a6dcef" /><rect x="3" y="10" width="5" height="4" fill="#ddd" /><rect x="10" y="10" width="5" height="4" fill="#ddd" /><rect x="17" y="10" width="4" height="4" fill="#2f6fc0" /><rect x="3" y="16" width="5" height="4" fill="#ddd" /><rect x="10" y="16" width="5" height="4" fill="#ddd" /><rect x="17" y="16" width="4" height="12" fill="#2f6fc0" /></svg>
    </div>
    <div className="w-[18px]" />
    {apps.map((a, i) => (
      <div key={i} className={`${a.w} ${a.cls ?? ""} flex items-start gap-[7px] pt-[9px] shrink-0`}>
        <div className="w-[26px] shrink-0 flex justify-center">{a.icon}</div>
        <span className="mt-[6px]">{a.t}</span>
      </div>
    ))}
    <div className="w-[20px] flex justify-center pt-[14px]"><ChevronUp size={18} strokeWidth={2} color="#333" /></div>
    <div className="w-[26px] ml-[3px] flex justify-center pt-[8px]">
      <svg width="14" height="28" viewBox="0 0 14 28"><rect x="3" y="1" width="8" height="16" rx="4" fill="#333" /><path d="M1 13A6 6 0 0 0 13 13M7 19V25M3 25H11" fill="none" stroke="#333" strokeWidth="1.3" /></svg>
    </div>
    <div className="w-[30px] flex justify-center pt-[13px]"><Volume1 size={20} strokeWidth={1.2} color="#444" /></div>
    <div className="w-[28px] flex justify-center pt-[18px]">
      <span className="w-[15px] h-[11px] border border-[#333] rounded-[2px] bg-[#333]" />
    </div>
    <div className="w-[48px] text-center pt-[13px] text-[12.5px]">ENG</div>
    <div className="w-[35px] flex justify-center pt-[13px]"><Settings size={20} strokeWidth={1.2} color="#444" /></div>
    <div className="w-[88px] text-center text-[13.5px] leading-[19px] pt-[4px]">
      <div>2:03 PM</div>
      <div>11/6/2024</div>
    </div>
    <div className="w-[38px] flex justify-center pt-[13px]">
      <svg width="20" height="22" viewBox="0 0 20 22"><path d="M1 1H19V17L14 21H1Z" fill="#222" /><path d="M4 6H16M4 10H16M4 14H11" stroke="#fff" strokeWidth="1.4" /></svg>
    </div>
  </div>
);

export default function App() {
  return (
    <div className={`w-[1920px] h-[1080px] overflow-hidden flex flex-col bg-white ${SANS}`}>
      <TitleBar />
      <MenuRow />
      <Ribbon />
      <TabRow />
      <DocArea />
      <StatusBar />
      <Taskbar />
      <div className="h-[2px] shrink-0 bg-black" />
    </div>
  );
}
